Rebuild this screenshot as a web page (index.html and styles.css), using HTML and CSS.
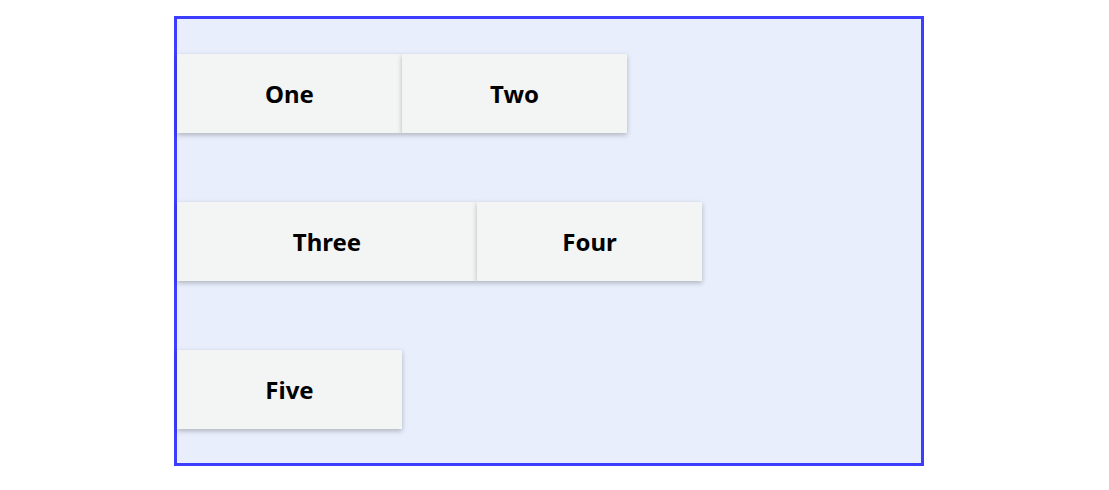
FILE: index.html
```html
<html>
<head>
<meta name="viewport" content="width=device-width, initial-scale=1.0">
<link rel="stylesheet" href="styles.css">
</head>
<body>
<div class="container">
<div class="item">One</div>
<div class="item">Two</div>
<div class="item wide">Three</div>
<div class="item">Four</div>
<div class="item">Five</div>
</div>
</body>
</html>
```
FILE: styles.css
```css
* {
    box-sizing: border-box;
}

body{
margin:0;
padding:16px 0 0 174px;
background:white;
font-family:"Noto Sans", "Open Sans", sans-serif;
}

.container{
width:750px;
height:450px;
border:3px solid #3d3dff;
background-color:#e8eefc;
display:flex;
flex-wrap:wrap;
align-content:space-around;
}

.item{
width:225px;
height:79px;
background-color:#f3f4f4;
box-shadow:0 2px 5px rgba(0,0,0,0.25);
display:flex;
align-items:center;
justify-content:center;
font-size:24px;
font-weight:bold;
color:black;
}

.item:nth-child(2){
margin-right:294px;
}

.item:nth-child(4){
margin-right:219px;
}

.wide{
width:300px;
}

.item:nth-child(5){
margin-right:519px;
}
```
